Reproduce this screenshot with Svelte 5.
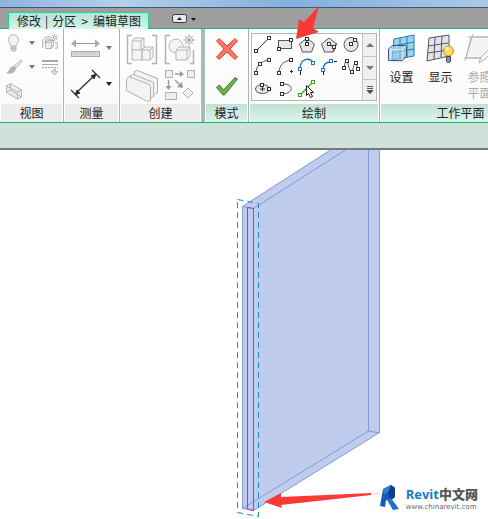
<script lang="ts">
    type Tool = { name: string; icon: string };

    const tools: Tool[] = [
        { name: "直线", icon: "line" },
        { name: "矩形", icon: "rect" },
        { name: "内接多边形", icon: "inscribed" },
        { name: "外接多边形", icon: "circumscribed" },
        { name: "圆形", icon: "circle" },
        { name: "起点-终点-半径弧", icon: "arc" },
        { name: "圆心-端点弧", icon: "center-arc" },
        { name: "相切-端点弧", icon: "tangent" },
        { name: "圆角弧", icon: "fillet" },
        { name: "样条曲线", icon: "spline" },
        { name: "椭圆", icon: "ellipse" },
        { name: "半椭圆", icon: "half-ellipse" },
        { name: "拾取线", icon: "pick" },
    ];

    let active = $state("");
</script>

{#snippet node(x: number, y: number, color = "#333")}
    <rect x={x - 1.5} y={y - 1.5} width="3" height="3" fill="#fff" stroke={color} />
{/snippet}

{#snippet caret(label: string, dark = false)}
    <button class="caret" class:dark aria-label={label}>
        <svg width="6" height="4" viewBox="0 0 6 4"><path d="M0 0h6L3 4z" fill="currentColor" /></svg>
    </button>
{/snippet}

<div class="app">
    <div class="titlebar"></div>
    <nav class="tabs">
        <button class="tab"><span>修改</span><span>|</span><span>分区</span><span class="gt">&gt;</span><span>编辑草图</span></button>
        <button class="minimize" aria-label="最小化功能区">
            <svg width="26" height="10" viewBox="0 0 26 10">
                <rect x="0.5" y="0.5" width="14" height="8" rx="2" fill="#e9e9f1" stroke="#34344a" />
                <path d="M5 6l2.500-3L10 6z" fill="#222" />
                <path d="M19 4h5l-2.500 3z" fill="#111" />
            </svg>
        </button>
    </nav>

    <div class="ribbon">
        <section class="panel view">
            <div class="body">
                <button aria-label="隐藏">
                    <svg width="18" height="18" viewBox="0 0 18 18" fill="#f3f3f3" stroke="#b5b5b5">
                        <path d="M6 12C6 10 3.500 9 3.500 5.800a5 5 0 0 1 10 0C13.500 9 11 10 11 12z" />
                        <path d="M6 13h5v3l-1 1H7l-1-1zM6 14.500h5" fill="#ddd" />
                    </svg>
                </button>
                {@render caret("隐藏选项")}
                <button aria-label="置换图元">
                    <svg width="18" height="18" viewBox="0 0 18 18" fill="#eee" stroke="#b5b5b5">
                        <path d="M1.500 14V7C3 3 7 2 10 3.500M4.500 13V7C5.500 5 8 4.500 11 6M14 8l2.500 1v5L14 15" />
                        <path d="M4.500 8.500h6v6h-6zM4.500 8.500l2-2h6l-2 2M10.500 14.500l2-2v-6" />
                        <path d="M13.500 0v7M10 3.500h7M11 1l5 5M16 1l-5 5" fill="none" />
                        <circle cx="13.500" cy="3.500" r="1.500" fill="#fff" />
                    </svg>
                </button>
                <button aria-label="替换">
                    <svg width="18" height="18" viewBox="0 0 18 18">
                        <path d="M16 2L9 8l2 2 6-7z" fill="#f2f2f2" stroke="#b5b5b5" />
                        <path d="M8 8c-4 1-3 5-7 7 5 2 10-1 10-5z" fill="#b5b5b5" />
                    </svg>
                </button>
                {@render caret("替换选项")}
                <button aria-label="线处理">
                    <svg width="18" height="18" viewBox="0 0 18 18">
                        <path d="M1 3h16" stroke="#aaa" stroke-width="2" />
                        <path d="M1 6.500h16M1 9.500h2M4 9.500h2M7 9.500h2M10 9.500h2M13 9.500h2M16 9.500h1" stroke="#aaa" />
                        <path d="M12.500 11h2v2.500H17L13.500 17 10 13.500h2.500z" fill="#ddd" stroke="#aaa" stroke-width=".7" />
                    </svg>
                </button>
                <button aria-label="选择框">
                    <svg width="18" height="18" viewBox="0 0 18 18" fill="none" stroke="#b5b5b5">
                        <path d="M1.500 4l4-2.500L16.500 8v7l-4 2-11-6.500z" fill="#eee" />
                        <path d="M1.500 4l11 6v7M12.500 10l4-2M5.500 2v6l11 7M5.500 8l-4 2.500" />
                    </svg>
                </button>
            </div>
            <h2>视图</h2>
        </section>

        <section class="panel measure">
            <div class="body">
                <button aria-label="测量">
                    <svg width="31" height="30" viewBox="0 0 31 30">
                        <path d="M4 10.500h23" stroke="#999" />
                        <path d="M1 10.500l5-4v8zM30 10.500l-5-4v8z" fill="#aaa" />
                        <rect x="1.500" y="18.500" width="28" height="5" fill="#d9d9d9" stroke="#aaa" />
                        <path d="M4.500 19v2M7.500 19v2M10.500 19v2M13.500 19v2M16.500 19v2M19.500 19v2M22.500 19v2M25.500 19v2" stroke="#bbb" />
                    </svg>
                </button>
                {@render caret("测量选项")}
                <button aria-label="尺寸标注">
                    <svg width="31" height="32" viewBox="0 0 31 32" stroke="#30303c">
                        <path d="M6 25L25 7" stroke-width="1.300" />
                        <path d="M5 27l2-5 3 3zM26 6l-2 5-3-3z" fill="#30303c" />
                        <path d="M1 22l8 8M22 2l8 8" stroke-width="1.200" />
                    </svg>
                </button>
                {@render caret("尺寸标注选项", true)}
            </div>
            <h2>测量</h2>
        </section>

        <section class="panel create">
            <div class="body">
                <button aria-label="创建组">
                    <svg width="32" height="32" viewBox="0 0 32 32" fill="#f5f5f5" stroke="#b5b5b5">
                        <path d="M6 1.500H1.500v28H6M26 1.500h4.500v28H26" fill="none" stroke-width="1.500" />
                        <path d="M6 7l3-3h9v10l-3 2H6zM6 7h9v9M15 7l3-3" />
                        <path d="M6 16h10v10H6zM16 16l3-3h8v10l-3 3h-8zM16 16h8v10M24 16l3-3" />
                    </svg>
                </button>
                <button aria-label="创建部件">
                    <svg width="32" height="32" viewBox="0 0 32 32" fill="#f5f5f5" stroke="#b5b5b5">
                        <path d="M6 1.500H1.500v28H6M26 29.500h3.500V16" fill="none" stroke-width="1.500" />
                        <circle cx="12" cy="12" r="7" />
                        <path d="M12 16l3-3h11v9l-3 4H12zM12 16h11v10M23 16l3-3" />
                        <circle cx="25" cy="6" r="3.500" />
                        <circle cx="25" cy="6" r="1.500" fill="#aaa" />
                        <path d="M25 0v3M25 9v3M19 6h3M28 6h3M21 2l2 2M29 2l-2 2M21 10l2-2M29 10l-2-2" />
                    </svg>
                </button>
                <button aria-label="创建零件">
                    <svg width="32" height="32" viewBox="0 0 32 32" fill="#f3f3f3" stroke="#b0b0b0">
                        <path d="M8.500 5V1.500l3-1 20 8v14l-3 2L9 16z" />
                        <path d="M4.500 9V5.500l3-1 20 8v14l-3 2L5 20z" />
                        <path d="M.5 9.500l2-3 5 2 3 1 13 5 1 2v14l-3 1-21-11z" />
                    </svg>
                </button>
                <button aria-label="创建类似">
                    <svg width="32" height="32" viewBox="0 0 32 32" fill="#efefef" stroke="#b0b0b0">
                        <path d="M1.500.5h7v7h-7zM23.500.5h7v7h-7zM1.500 22.500h11v7h-11zM19 23l5-5 5 5-5 5z" />
                        <path d="M11 4h6M4.500 10v6M11 10l5 5" stroke="#999" stroke-width="1.300" />
                        <path d="M20 4l-4-3v6zM4.500 20l-3-4h6zM19 18l-6-1 5-5z" fill="#999" stroke="none" />
                    </svg>
                </button>
            </div>
            <h2>创建</h2>
        </section>

        <section class="panel mode contextual">
            <div class="body">
                <button aria-label="取消编辑模式">
                    <svg width="24" height="24" viewBox="0 0 24 24">
                        <path d="M4 1.500l8 7.500 8-7.500L22.500 4 15 12l7.500 8-2.500 2.500-8-7.500-8 7.500L1.500 20 9 12 1.500 4z" fill="#ff7668" stroke="#cf4538" />
                    </svg>
                </button>
                <button aria-label="完成编辑模式">
                    <svg width="24" height="24" viewBox="0 0 24 24">
                        <path d="M1.500 12.500L4.500 10l4 5L20 2.500 22.500 4 9.500 20H8z" fill="#6cb352" stroke="#3c7430" />
                    </svg>
                </button>
            </div>
            <h2>模式</h2>
        </section>

        <section class="panel draw contextual">
            <div class="body">
                <div class="gallery">
                    <div class="tools">
                        {#each tools as tool}
                            <button aria-label={tool.name} aria-pressed={active === tool.icon} onclick={() => (active = tool.icon)}>
                                <svg width="18" height="18" viewBox="0 0 18 18" fill="none" stroke="#555">
                                    {#if tool.icon === "line"}
                                        <path d="M2 15L15 2" stroke="#333" />
                                        {@render node(2, 15)}{@render node(15, 2)}
                                    {:else if tool.icon === "rect"}
                                        <rect x="2.500" y="4.500" width="13" height="8" fill="#e4e6ec" />
                                        {@render node(3, 13)}{@render node(15, 4)}
                                    {:else if tool.icon === "inscribed"}
                                        <path d="M9 2l7.500 6-3 8h-9l-3-8z" fill="#e4e6ec" />
                                        <path d="M9 3v5" stroke="#222" />
                                        {@render node(9, 3)}{@render node(9, 8)}
                                    {:else if tool.icon === "circumscribed"}
                                        <path d="M9 2l7.500 6-3 8h-9l-3-8z" fill="#e4e6ec" />
                                        <path d="M16.500 7l-4 9" stroke="#f22" stroke-dasharray="4 2" />
                                        <path d="M9 8l5 3" stroke="#222" />
                                        {@render node(9, 8)}{@render node(14, 11)}
                                    {:else if tool.icon === "circle"}
                                        <circle cx="9" cy="8.500" r="7" fill="#e4e6ec" />
                                        <path d="M9 8l5-5" />
                                        {@render node(9, 8)}{@render node(13, 4)}
                                    {:else if tool.icon === "arc"}
                                        <path d="M2 15C2 8 7 3 15 2" />
                                        {@render node(2, 15)}{@render node(6, 6)}{@render node(15, 2)}
                                    {:else if tool.icon === "center-arc"}
                                        <path d="M3 15C3 8 7 3 15 2" />
                                        <path d="M15.500 12v3M14 13.500h3" stroke="#333" />
                                        {@render node(3, 15)}{@render node(15, 2)}
                                    {:else if tool.icon === "tangent"}
                                        <path d="M2 11C2 0 12 -1 15 5" stroke="#1874c8" stroke-width="1.300" />
                                        <path d="M2.500 13v4" stroke="#222" />
                                        {@render node(2, 11, "#1874c8")}{@render node(15, 5, "#1874c8")}
                                    {:else if tool.icon === "fillet"}
                                        <path d="M3 12c0-5 2-8 8-8" stroke="#1874c8" stroke-width="1.300" />
                                        <path d="M3.500 14v3M14 3.500h3" stroke="#222" />
                                        {@render node(3, 12, "#1874c8")}{@render node(11, 3, "#1874c8")}
                                    {:else if tool.icon === "spline"}
                                        <path d="M2 10C3 2 5 1 6 6s3 9 4 8 2-11 4-8 1 5 3 5" />
                                        {@render node(2, 10)}{@render node(5, 3)}{@render node(10, 14)}{@render node(14, 5)}{@render node(16, 11)}
                                    {:else if tool.icon === "ellipse"}
                                        <ellipse cx="8.500" cy="9" rx="7" ry="4.500" fill="#e4e6ec" />
                                        <path d="M6 9h5M8.500 7v4" stroke="#333" />
                                        {@render node(15, 9)}{@render node(8, 5)}
                                    {:else if tool.icon === "half-ellipse"}
                                        <path d="M7 4c11 0 11 9 0 10" />
                                        {@render node(6, 4)}{@render node(6, 14)}
                                    {:else}
                                        <path d="M2 15L15 2" stroke="#42ad28" stroke-width="1.500" />
                                        {@render node(2, 15, "#32a518")}{@render node(15, 2, "#32a518")}
                                        <path d="M8.500 5.500v10l2-2 2 4 2-1-2-4h3z" fill="#fff" stroke="#222" />
                                    {/if}
                                </svg>
                            </button>
                        {/each}
                    </div>
                    <div class="scroller">
                        <button aria-label="上一行"><svg width="8" height="4" viewBox="0 0 8 4"><path d="M0 4l4-4 4 4z" fill="#777" /></svg></button>
                        <button aria-label="下一行"><svg width="8" height="4" viewBox="0 0 8 4"><path d="M0 0l4 4 4-4z" fill="#777" /></svg></button>
                        <button aria-label="展开"><svg width="8" height="8" viewBox="0 0 8 8"><path d="M1 .5h6M1 2.500h6M1 4.500l3 3 3-3z" fill="#444" stroke="#555" /></svg></button>
                    </div>
                </div>
            </div>
            <h2>绘制</h2>
        </section>

        <section class="panel plane contextual">
            <div class="body">
                <button>
                    <svg width="32" height="32" viewBox="0 0 32 32">
                        <path d="M8 5l20-4v21L6 26z" fill="#9dd2f0" stroke="#267aae" />
                        <path d="M14 4v20M21 3v20M7 12l21-4M6 19l22-4" stroke="#267aae" />
                        <path d="M2.500 15l4-3.500h14V22l-4 4.500h-14z" fill="#a4cbe8" fill-opacity=".6" stroke="#345a82" />
                        <path d="M3 15.500h13.500V26M16.500 15.500l4-4" fill="none" stroke="#d3e9f6" />
                        <path d="M5 28h13l9-4" fill="none" stroke="#ddd" />
                    </svg>
                    设置
                </button>
                <button>
                    <svg width="32" height="32" viewBox="0 0 32 32">
                        <path d="M4 4l20-3v21L2 27z" fill="#e3e3e9" />
                        <path d="M4 4l20-3v21L2 27zM10 3L9 25M17 2l-1 21M3 12l20-3M3 19l20-3" fill="none" stroke="#555562" />
                        <circle cx="23.500" cy="17" r="5" fill="#ffd95b" stroke="#c7911c" />
                        <circle cx="22" cy="15" r="2" fill="#fff2ab" />
                        <path d="M21.500 22.500h4v5l-1 1h-2l-1-1z" fill="#888f9d" stroke="#444c5e" />
                    </svg>
                    显示
                </button>
                <button class="disabled">
                    <svg width="32" height="32" viewBox="0 0 32 32" fill="#f4f4f4" stroke="#b5b5b5">
                        <path d="M7 3h25v8L18 24H2zM9 0L1 27M4 3h28M0 24h22" />
                        <path d="M29 11l3 3-12 12-5 3 2-6z" />
                    </svg>
                    参照<br />平面
                </button>
            </div>
            <h2>工作平面</h2>
        </section>

        <svg class="pointer" width="26" height="36" viewBox="0 0 26 36">
            <path d="M1 34L4 14l5 3L24 1l-6 22 6 4z" fill="#fb3a38" />
        </svg>
    </div>

    <div class="options"></div>

    <main>
        <svg class="model" width="488" height="369" viewBox="0 150 488 369" fill="none">
            <path d="M242.500 206.500L332 149h47.500v283.500L253.500 510.500l-11-2z" fill="#bfccee" stroke="#7f99da" />
            <path d="M242.500 206.500l11 2L347 149M368.500 149v282l11 2M368.500 431l-126 77.500" stroke="#7f99da" />
            <path d="M247.500 207.500l6 1v302l-6-1.500z" stroke="#ee10ee" />
            <path d="M237.500 199.500l21 4v313l-21-4z" stroke="#168fbd" stroke-dasharray="6 4" />
            <path d="M264 502l17-9v4l90-4v2l-90 10 1 3z" fill="#fb3a38" />
            <path d="M371 493.500h9" stroke="#fbdcd8" />
        </svg>
        <a class="brand" href="http://www.chinarevit.com">
            <svg width="20" height="28" viewBox="0 0 20 28">
                <path d="M3 4l8-4 4 3v9l-5 4-4-1-1 7-5-1z" fill="#185ab0" />
                <path d="M3 4l8-4-1 5-6 5z" fill="#2a82d5" />
                <path d="M11 0l4 3v9l-5 4-2-8z" fill="#123f8c" />
                <path d="M7 15l4-2 8 11-6 1z" fill="#1d73ce" />
            </svg>
            <span class="words">
                <span class="name">Revit<b>中文网</b></span>
                <span class="site">www.chinarevit.com</span>
            </span>
        </a>
    </main>
</div>

<style>
    :global(body) {
        margin: 0;
    }

    .app {
        display: flex;
        flex-direction: column;
        min-height: 100vh;
        overflow: hidden;
        background: #fff;
        color: #222;
        font: 12px/16px "Noto Sans CJK SC", sans-serif;
    }

    button {
        display: flex;
        align-items: center;
        justify-content: center;
        padding: 0;
        border: 0;
        background: none;
        color: inherit;
        font: inherit;
    }

    svg {
        display: block;
        flex: none;
    }

    .titlebar {
        height: 7px;
        background: linear-gradient(90deg, #8eb4df, #b4d0ec 25%, #82b0df 60%, #a9c9e8);
        border-bottom: 1px solid #45556e;
    }

    .tabs {
        display: flex;
        align-items: flex-end;
        height: 20px;
        padding-left: 8px;
        background: #9f9f9f;
        border-bottom: 1px solid #18b66c;
    }

    .tab {
        gap: 4px;
        height: 17px;
        padding: 0 7px 0 8px;
        margin-bottom: -1px;
        border: 1px solid #18d890;
        border-bottom: 0;
        background: linear-gradient(#b5e2d6, #d5f5eb);
    }

    .gt {
        padding: 0 1px;
    }

    .minimize {
        margin: 0 0 4px 23px;
    }

    .ribbon {
        position: relative;
        display: flex;
        border-bottom: 1px solid #18b66c;
    }

    .panel {
        display: flex;
        flex-direction: column;
        flex: none;
        box-sizing: border-box;
        border-right: 1px solid #aab5b1;
    }

    .body {
        box-sizing: border-box;
        height: 75px;
        background: linear-gradient(#fff, #fafafa);
    }

    h2 {
        margin: 0;
        padding-bottom: 1px;
        border-right: 1px solid #fff;
        border-left: 1px solid #fff;
        background: #ececec;
        font-size: 12px;
        font-weight: 400;
        line-height: 17px;
        text-align: center;
    }

    .contextual h2 {
        background: linear-gradient(#c3e0d7, #d9f5ec);
    }

    .caret {
        color: #777;
    }

    .dark {
        color: #222;
    }

    .view {
        width: 64px;
    }

    .view .body {
        display: grid;
        grid-template-columns: 18px 14px 18px;
        grid-template-rows: repeat(3, 18px);
        gap: 6px 2px;
        padding: 5px;
    }

    .measure {
        width: 56px;
    }

    .measure .body {
        display: grid;
        grid-template-columns: 31px 14px;
        gap: 4px 1px;
        padding: 4px 6px;
    }

    .create {
        width: 85px;
        border-right: 4px solid #a6bdb5;
    }

    .create .body {
        display: grid;
        grid-template-columns: 32px 32px;
        gap: 4px 6px;
        padding: 5px 6px;
    }

    .mode {
        width: 44px;
    }

    .mode .body {
        display: flex;
        flex-direction: column;
        align-items: center;
        gap: 14px;
        padding-top: 8px;
    }

    .draw {
        width: 131px;
    }

    .draw .body {
        padding: 4px 2px;
    }

    .gallery {
        display: flex;
        border: 1px solid #b8b8b8;
    }

    .tools {
        display: grid;
        flex: 1;
        grid-template-columns: repeat(5, 22px);
        grid-template-rows: repeat(3, 22px);
    }

    .scroller {
        display: grid;
        width: 14px;
        grid-template-rows: 22px 22px 20px;
        gap: 1px;
        background: #c4c4c4;
        border-left: 1px solid #c4c4c4;
    }

    .scroller button {
        background: #f0f0f0;
    }

    .plane {
        width: 162px;
    }

    .plane .body {
        display: flex;
        align-items: flex-start;
        padding: 5px 2px;
    }

    .plane button {
        flex-direction: column;
        width: 39px;
        gap: 3px;
    }

    .plane .disabled {
        color: #aaa;
    }

    .pointer {
        position: absolute;
        top: -24px;
        left: 295px;
    }

    .options {
        height: 25px;
        background: #d0e1db;
        border-bottom: 2px solid #777;
    }

    main {
        position: relative;
        flex: 1;
    }

    .brand {
        position: absolute;
        right: 10px;
        bottom: 6px;
        display: flex;
        gap: 6px;
        color: #666;
        text-decoration: none;
    }

    .words {
        display: flex;
        flex-direction: column;
        padding-top: 2px;
    }

    .name {
        color: #187bc7;
        font: bold 13px/15px "Open Sans", "Noto Sans CJK SC", sans-serif;
        white-space: nowrap;
    }

    .name b {
        color: #555;
    }

    .site {
        font: 7px/11px "DejaVu Sans", sans-serif;
    }
</style>
